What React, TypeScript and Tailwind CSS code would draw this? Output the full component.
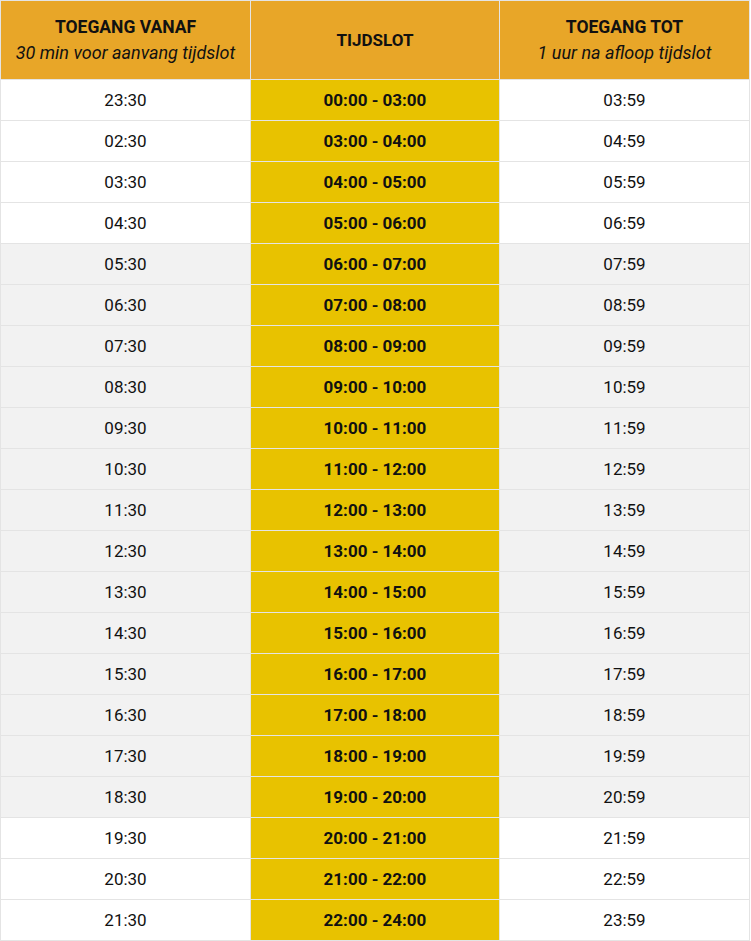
import React from "react";

const rows: [string, string, string][] = [
  ["23:30", "00:00 - 03:00", "03:59"],
  ["02:30", "03:00 - 04:00", "04:59"],
  ["03:30", "04:00 - 05:00", "05:59"],
  ["04:30", "05:00 - 06:00", "06:59"],
  ["05:30", "06:00 - 07:00", "07:59"],
  ["06:30", "07:00 - 08:00", "08:59"],
  ["07:30", "08:00 - 09:00", "09:59"],
  ["08:30", "09:00 - 10:00", "10:59"],
  ["09:30", "10:00 - 11:00", "11:59"],
  ["10:30", "11:00 - 12:00", "12:59"],
  ["11:30", "12:00 - 13:00", "13:59"],
  ["12:30", "13:00 - 14:00", "14:59"],
  ["13:30", "14:00 - 15:00", "15:59"],
  ["14:30", "15:00 - 16:00", "16:59"],
  ["15:30", "16:00 - 17:00", "17:59"],
  ["16:30", "17:00 - 18:00", "18:59"],
  ["17:30", "18:00 - 19:00", "19:59"],
  ["18:30", "19:00 - 20:00", "20:59"],
  ["19:30", "20:00 - 21:00", "21:59"],
  ["20:30", "21:00 - 22:00", "22:59"],
  ["21:30", "22:00 - 24:00", "23:59"],
];

export default function App() {
  return (
    <div className="bg-white w-[751px] h-[941px] font-['Roboto',_'Liberation_Sans',_sans-serif] text-[#111]">
      <div className="grid grid-cols-[249px_248px_249px] gap-px bg-[#e4e4e4] p-px w-[750px]">
        <div className="h-[78px] bg-[#e8a628] flex flex-col items-center justify-center gap-[6px] pb-px">
          <div className="font-bold text-[17.5px] leading-5">TOEGANG VANAF</div>
          <div className="italic text-[18px] leading-5">30 min voor aanvang tijdslot</div>
        </div>
        <div className="h-[78px] bg-[#e8a628] flex items-center justify-center">
          <div className="font-bold text-[17px] leading-5">TIJDSLOT</div>
        </div>
        <div className="h-[78px] bg-[#e8a628] flex flex-col items-center justify-center gap-[6px] pb-px">
          <div className="font-bold text-[17.5px] leading-5">TOEGANG TOT</div>
          <div className="italic text-[18px] leading-5">1 uur na afloop tijdslot</div>
        </div>
        {rows.map(([a, b, c], i) => {
          const grey = i >= 4 && i <= 17;
          const bg = grey ? "bg-[#f2f2f2]" : "bg-white";
          return (
            <React.Fragment key={i}>
              <div className={`h-10 ${bg} flex items-center justify-center text-[17px] pt-[2px]`}>{a}</div>
              <div className="h-10 bg-[#e8c200] flex items-center justify-center text-[17px] font-bold pt-[2px]">{b}</div>
              <div className={`h-10 ${bg} flex items-center justify-center text-[17px] pt-[2px]`}>{c}</div>
            </React.Fragment>
          );
        })}
      </div>
    </div>
  );
}
